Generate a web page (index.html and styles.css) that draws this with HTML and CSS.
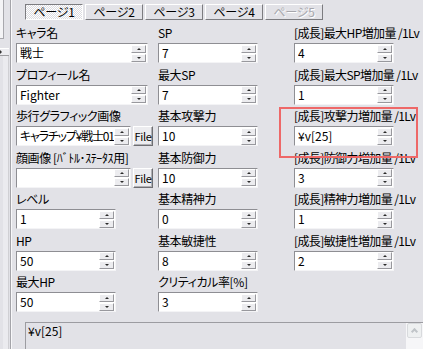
FILE: index.html
```html
<!DOCTYPE html>
<html lang="ja">
<head>
<meta charset="utf-8">
<title>キャラ設定</title>
<link rel="stylesheet" href="styles.css">
</head>
<body>
<div class="window">
  <aside class="side">
    <div class="side-box"></div>
    <div class="side-head"><span class="side-arrow"></span></div>
    <div class="side-list"></div>
  </aside>
  <main class="main">
    <nav class="tabs">
      <div class="tab active">ページ1</div>
      <div class="tab">ページ2</div>
      <div class="tab">ページ3</div>
      <div class="tab">ページ4</div>
      <div class="tab disabled">ページ5</div>
    </nav>
    <div class="form">
      <!-- row 1 -->
      <div class="field"><div class="lbl">キャラ名</div>
        <div class="box w132"><span class="val">戦士</span><span class="spin"><i class="sb"><b class="up"></b></i><i class="sb"><b class="dn"></b></i></span></div></div>
      <div class="field"><div class="lbl">SP</div>
        <div class="box w100"><span class="val">7</span><span class="spin"><i class="sb"><b class="up"></b></i><i class="sb"><b class="dn"></b></i></span></div></div>
      <div class="field"><div class="lbl grow">[成長]最大HP増加量 /1Lv</div>
        <div class="box w100"><span class="val">4</span><span class="spin"><i class="sb"><b class="up"></b></i><i class="sb"><b class="dn"></b></i></span></div></div>
      <!-- row 2 -->
      <div class="field"><div class="lbl">プロフィール名</div>
        <div class="box w132"><span class="val">Fighter</span><span class="spin"><i class="sb"><b class="up"></b></i><i class="sb"><b class="dn"></b></i></span></div></div>
      <div class="field"><div class="lbl">最大SP</div>
        <div class="box w100"><span class="val">7</span><span class="spin"><i class="sb"><b class="up"></b></i><i class="sb"><b class="dn"></b></i></span></div></div>
      <div class="field"><div class="lbl grow">[成長]最大SP増加量 /1Lv</div>
        <div class="box w100"><span class="val">1</span><span class="spin"><i class="sb"><b class="up"></b></i><i class="sb"><b class="dn"></b></i></span></div></div>
      <!-- row 3 -->
      <div class="field"><div class="lbl">歩行グラフィック画像</div>
        <div class="pair"><div class="box w115"><span class="val tight">キャラチップ¥戦士01</span><span class="spin"><i class="sb"><b class="up"></b></i><i class="sb"><b class="dn"></b></i></span></div><div class="file">File</div></div></div>
      <div class="field"><div class="lbl">基本攻撃力</div>
        <div class="box w100"><span class="val">10</span><span class="spin"><i class="sb"><b class="up"></b></i><i class="sb"><b class="dn"></b></i></span></div></div>
      <div class="field"><div class="lbl grow">[成長]攻撃力増加量 /1Lv</div>
        <div class="box w100"><span class="val">¥v[25]</span><span class="spin"><i class="sb"><b class="up"></b></i><i class="sb"><b class="dn"></b></i></span></div></div>
      <!-- row 4 -->
      <div class="field"><div class="lbl">顔画像 [ﾊﾞﾄﾙ･ｽﾃｰﾀｽ用]</div>
        <div class="pair"><div class="box w115"><span class="val"></span><span class="spin"><i class="sb"><b class="up"></b></i><i class="sb"><b class="dn"></b></i></span></div><div class="file">File</div></div></div>
      <div class="field"><div class="lbl">基本防御力</div>
        <div class="box w100"><span class="val">10</span><span class="spin"><i class="sb"><b class="up"></b></i><i class="sb"><b class="dn"></b></i></span></div></div>
      <div class="field"><div class="lbl grow">[成長]防御力増加量 /1Lv</div>
        <div class="box w100"><span class="val">3</span><span class="spin"><i class="sb"><b class="up"></b></i><i class="sb"><b class="dn"></b></i></span></div></div>
      <!-- row 5 -->
      <div class="field"><div class="lbl">レベル</div>
        <div class="box w100"><span class="val">1</span><span class="spin"><i class="sb"><b class="up"></b></i><i class="sb"><b class="dn"></b></i></span></div></div>
      <div class="field"><div class="lbl">基本精神力</div>
        <div class="box w100"><span class="val">0</span><span class="spin"><i class="sb"><b class="up"></b></i><i class="sb"><b class="dn"></b></i></span></div></div>
      <div class="field"><div class="lbl grow">[成長]精神力増加量 /1Lv</div>
        <div class="box w100"><span class="val">1</span><span class="spin"><i class="sb"><b class="up"></b></i><i class="sb"><b class="dn"></b></i></span></div></div>
      <!-- row 6 -->
      <div class="field"><div class="lbl">HP</div>
        <div class="box w100"><span class="val">50</span><span class="spin"><i class="sb"><b class="up"></b></i><i class="sb"><b class="dn"></b></i></span></div></div>
      <div class="field"><div class="lbl">基本敏捷性</div>
        <div class="box w100"><span class="val">8</span><span class="spin"><i class="sb"><b class="up"></b></i><i class="sb"><b class="dn"></b></i></span></div></div>
      <div class="field"><div class="lbl grow">[成長]敏捷性増加量 /1Lv</div>
        <div class="box w100"><span class="val">2</span><span class="spin"><i class="sb"><b class="up"></b></i><i class="sb"><b class="dn"></b></i></span></div></div>
      <!-- row 7 -->
      <div class="field"><div class="lbl">最大HP</div>
        <div class="box w100"><span class="val">50</span><span class="spin"><i class="sb"><b class="up"></b></i><i class="sb"><b class="dn"></b></i></span></div></div>
      <div class="field"><div class="lbl">クリティカル率[%]</div>
        <div class="box w100"><span class="val">3</span><span class="spin"><i class="sb"><b class="up"></b></i><i class="sb"><b class="dn"></b></i></span></div></div>
    </div>
    <div class="memo">
      <div class="memo-text">¥v[25]</div>
      <div class="scroll"><div class="scroll-up"><span class="chev"></span></div></div>
    </div>
  </main>
  <div class="highlight"></div>
</div>
</body>
</html>
```

FILE: styles.css
```css
* { box-sizing: border-box; margin: 0; padding: 0; }

html, body {
  width: 423px;
  height: 349px;
  overflow: hidden;
}

body {
  background: #e2e2e7;
  color: #000;
  font-family: "Noto Sans CJK JP", "Liberation Sans", sans-serif;
  font-size: 12px;
  font-feature-settings: "palt";
}

.window {
  position: relative;
  display: flex;
  height: 349px;
}

/* left cut-off panel */
.side {
  flex: none;
  width: 11px;
  display: flex;
  flex-direction: column;
  border-right: 1px solid #a4a4a9;
  box-shadow: 1px 0 0 #f8f8fa;
}
.side-box {
  width: 4px;
  height: 39px;
  background: #f4f4f6;
  border-right: 1px solid #a8a8ad;
  border-bottom: 1px solid #a8a8ad;
}
.side-head {
  margin-top: 9px;
  width: 9px;
  height: 8px;
  background: #ececf0;
  border-top: 1px solid #fff;
  border-bottom: 1px solid #9c9ca0;
  display: flex;
  align-items: center;
}
.side-arrow {
  width: 0;
  height: 0;
  border-top: 2px solid transparent;
  border-bottom: 2px solid transparent;
  border-left: 2px solid #333;
}
.side-list {
  flex: 1;
  width: 9px;
  background: #ebebef;
  border-left: 3px solid #e2e2e7;
  border-right: 1px solid #d0d0d4;
}

.main {
  flex: 1;
  padding-top: 4px;
  display: flex;
  flex-direction: column;
  min-width: 0;
}

/* tabs */
.tabs {
  display: flex;
  gap: 2px;
  margin-left: 14px;
  height: 16px;
}
.tab {
  width: 58px;
  height: 16px;
  line-height: 14px;
  text-align: center;
  border: 1px solid;
  border-color: #fff #7c7c80 #7c7c80 #fff;
  background: #e2e2e7;
  letter-spacing: -0.3px;
}
.tab.active {
  border-color: #7c7c80 #fff #fff #7c7c80;
  background: repeating-conic-gradient(#ffffff 0 25%, #dcdce1 0 50%) 0 0 / 2px 2px;
}
.tab.disabled {
  color: #a6a6ab;
  text-shadow: 1px 1px 0 #fff;
}

/* form grid */
.form {
  margin-left: 5px;
  margin-top: 1.5px;
  display: grid;
  grid-template-columns: 142px 136px 129px;
  grid-auto-rows: 41.5px;
}
.field {
  display: flex;
  flex-direction: column;
  justify-content: flex-end;
  min-width: 0;
}
.lbl {
  line-height: 14px;
  margin-bottom: 3px;
  white-space: nowrap;
  letter-spacing: -0.4px;
}
.lbl.grow {
  letter-spacing: -0.6px;
}

.pair {
  display: flex;
  gap: 2px;
}

.box {
  height: 20px;
  background: #fff;
  border: 1px solid;
  border-color: #8e8e93 #f4f4f6 #f4f4f6 #8e8e93;
  display: flex;
  align-items: center;
  padding-left: 3px;
  overflow: hidden;
}
.w132 { width: 132px; }
.w115 { width: 115px; }
.w100 { width: 100px; }

.val {
  flex: 1;
  min-width: 0;
  white-space: nowrap;
  overflow: hidden;
  line-height: 16px;
}
.val.tight {
  letter-spacing: -1.2px;
}

.spin {
  flex: none;
  display: flex;
  flex-direction: column;
  gap: 1px;
  margin-right: 1px;
}
.sb {
  width: 15px;
  height: 8px;
  background: #ececef;
  border: 1px solid;
  border-color: #fff #98989d #98989d #fff;
  display: flex;
  align-items: center;
  justify-content: center;
}
.up, .dn {
  width: 0;
  height: 0;
  border-left: 2px solid transparent;
  border-right: 2px solid transparent;
}
.up { border-bottom: 2px solid #2a2a2a; }
.dn { border-top: 2px solid #2a2a2a; }

.file {
  width: 20px;
  height: 20px;
  background: #ececef;
  border: 1px solid;
  border-color: #fff #6e6e72 #6e6e72 #fff;
  box-shadow: inset -1px -1px 0 #b0b0b5;
  text-align: center;
  line-height: 18px;
  font-size: 11px;
  letter-spacing: -0.3px;
}

/* memo */
.memo {
  margin-top: 10px;
  margin-left: 14px;
  flex: 1;
  display: flex;
  border-top: 1px solid #9c9ca1;
  border-left: 1px solid #9c9ca1;
}
.memo-text {
  flex: 1;
  padding: 1px 0 0 2px;
  line-height: 14px;
}
.scroll {
  flex: none;
  width: 17px;
  background: #f6f6f8;
  padding: 0 0 0 1px;
}
.scroll-up {
  width: 15px;
  height: 15px;
  background: #eef0f1;
  border: 1px solid #d8dadd;
  border-radius: 2px;
  display: flex;
  align-items: center;
  justify-content: center;
}
.chev {
  width: 5px;
  height: 5px;
  border-left: 2px solid #c0c4c8;
  border-top: 2px solid #c0c4c8;
  transform: translateY(1px) rotate(45deg);
}

/* annotation */
.highlight {
  position: absolute;
  left: 279px;
  top: 107px;
  width: 139px;
  height: 51px;
  border: 2px solid #ee6868;
  pointer-events: none;
}
```
